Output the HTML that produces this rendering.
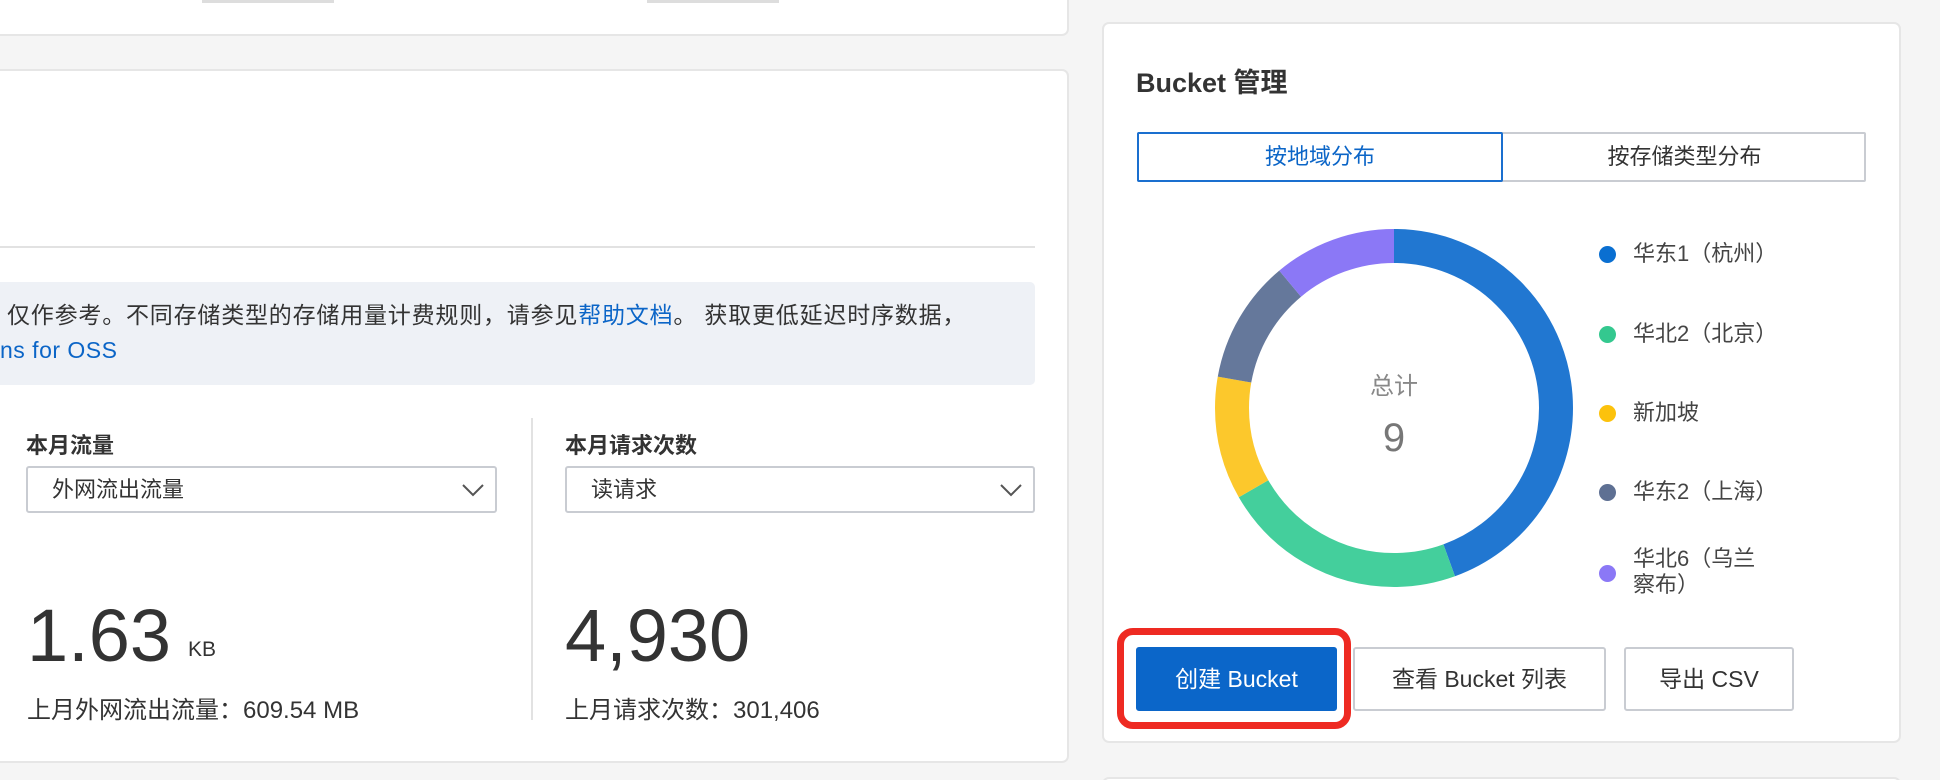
<!DOCTYPE html>
<html><head><meta charset="utf-8"><style>
*{margin:0;padding:0;box-sizing:border-box}
html,body{width:1940px;height:780px;overflow:hidden}
body{background:#f5f5f5;position:relative;font-family:"Liberation Sans","Noto Sans CJK SC",sans-serif;color:#333}
.card{position:absolute;background:#fff;border:2px solid #e6e6e6;border-radius:7px}
.abs{position:absolute;white-space:nowrap}
.sel{position:absolute;height:47px;border:2px solid #c9ccd2;border-radius:3px;background:#fff;font-size:22px;line-height:43px;padding-left:24px;color:#333}
.sel svg{position:absolute;right:10px;top:12px}
.btn{position:absolute;top:647px;height:64px;border:2px solid #c9ccd2;border-radius:3px;background:#fff;font-size:23px;line-height:60px;text-align:center;color:#333}
.dot{position:absolute;width:17px;height:17px;border-radius:50%;left:1599px}
.lg{position:absolute;left:1633px;font-size:22px;color:#444;line-height:26px}
</style></head><body>
<div class="card" style="left:-10px;top:-10px;width:1079px;height:46px"></div>
<div class="abs" style="left:202px;top:0;width:132px;height:3px;background:#ddd"></div>
<div class="abs" style="left:647px;top:0;width:132px;height:3px;background:#ddd"></div>

<div class="card" style="left:-10px;top:69px;width:1079px;height:694px"></div>
<div class="abs" style="left:0;top:246px;width:1035px;height:2px;background:#e2e2e2"></div>
<div class="abs" style="left:0;top:282px;width:1035px;height:103px;background:#eef1f6;border-radius:0 5px 5px 0"></div>
<div class="abs" style="left:7px;top:300px;font-size:23px;line-height:30px;letter-spacing:0.8px;color:#333">仅作参考。不同存储类型的存储用量计费规则，请参见<span style="color:#0b65c7">帮助文档</span>。 获取更低延迟时序数据，</div>
<div class="abs" style="left:0;top:335px;font-size:23px;line-height:30px;letter-spacing:0.5px;color:#0b65c7">ns for OSS</div>

<div class="abs" style="left:26px;top:428px;font-size:22px;font-weight:bold;color:#333">本月流量</div>
<div class="sel" style="left:26px;top:466px;width:471px">外网流出流量<svg width="24" height="20" viewBox="0 0 24 20"><path d="M2 5l10 10 10-10" fill="none" stroke="#555" stroke-width="2"/></svg></div>
<div class="abs" style="left:531px;top:418px;width:2px;height:302px;background:#e2e2e2"></div>
<div class="abs" style="left:565px;top:428px;font-size:22px;font-weight:bold;color:#333">本月请求次数</div>
<div class="sel" style="left:565px;top:466px;width:470px">读请求<svg width="24" height="20" viewBox="0 0 24 20"><path d="M2 5l10 10 10-10" fill="none" stroke="#555" stroke-width="2"/></svg></div>

<div class="abs" style="left:27px;top:594px;font-size:74px;line-height:84px;color:#333">1.63</div>
<div class="abs" style="left:188px;top:638px;font-size:21px;color:#333">KB</div>
<div class="abs" style="left:27px;top:690px;font-size:24px;color:#333">上月外网流出流量：609.54 MB</div>
<div class="abs" style="left:565px;top:594px;font-size:74px;line-height:84px;color:#333">4,930</div>
<div class="abs" style="left:565px;top:690px;font-size:24px;color:#333">上月请求次数：301,406</div>

<div class="card" style="left:1102px;top:22px;width:799px;height:721px"></div>
<div class="card" style="left:1102px;top:777px;width:799px;height:20px"></div>
<div class="abs" style="left:1136px;top:61px;font-size:27px;font-weight:bold;color:#333">Bucket 管理</div>
<div class="abs" style="left:1137px;top:132px;width:729px;height:50px;border:2px solid #c9ccd2;border-radius:2px"></div>
<div class="abs" style="left:1137px;top:132px;width:366px;height:50px;border:2px solid #1a6fcf;border-radius:2px;color:#0b65c7;font-size:22px;line-height:46px;text-align:center">按地域分布</div>
<div class="abs" style="left:1503px;top:132px;width:363px;height:50px;color:#333;font-size:22px;line-height:50px;text-align:center">按存储类型分布</div>

<svg class="abs" style="left:1215px;top:229px" width="358" height="358" viewBox="0 0 358 358">
<g transform="rotate(-90 179 179)" fill="none" stroke-width="34">
<circle cx="179" cy="179" r="162" stroke="#2177d1" stroke-dasharray="452.4 1017.9" stroke-dashoffset="0"/>
<circle cx="179" cy="179" r="162" stroke="#44cf9c" stroke-dasharray="226.2 1017.9" stroke-dashoffset="-452.4"/>
<circle cx="179" cy="179" r="162" stroke="#fcc82c" stroke-dasharray="113.1 1017.9" stroke-dashoffset="-678.6"/>
<circle cx="179" cy="179" r="162" stroke="#65789b" stroke-dasharray="113.1 1017.9" stroke-dashoffset="-791.7"/>
<circle cx="179" cy="179" r="162" stroke="#8b78f6" stroke-dasharray="113.1 1017.9" stroke-dashoffset="-904.8"/>
</g></svg>
<div class="abs" style="left:1344px;top:366px;width:100px;text-align:center;font-size:24px;color:#888">总计</div>
<div class="abs" style="left:1344px;top:416px;width:100px;text-align:center;font-size:40px;color:#777">9</div>

<div class="dot" style="top:246px;background:#0a6fd1"></div><div class="lg" style="top:241px">华东1（杭州）</div>
<div class="dot" style="top:326px;background:#34c88f"></div><div class="lg" style="top:321px">华北2（北京）</div>
<div class="dot" style="top:405px;background:#fcc20c"></div><div class="lg" style="top:400px">新加坡</div>
<div class="dot" style="top:484px;background:#5e7093"></div><div class="lg" style="top:479px">华东2（上海）</div>
<div class="dot" style="top:565px;background:#8b78f6"></div><div class="lg" style="top:546px">华北6（乌兰<br>察布）</div>

<div class="abs" style="left:1117px;top:628px;width:234px;height:101px;border:7px solid #ee2a22;border-radius:16px"></div>
<div class="btn" style="left:1136px;width:201px;background:#0b66c9;border-color:#0b66c9;color:#fff">创建 Bucket</div>
<div class="btn" style="left:1353px;width:253px">查看 Bucket 列表</div>
<div class="btn" style="left:1624px;width:170px">导出 CSV</div>
</body></html>
